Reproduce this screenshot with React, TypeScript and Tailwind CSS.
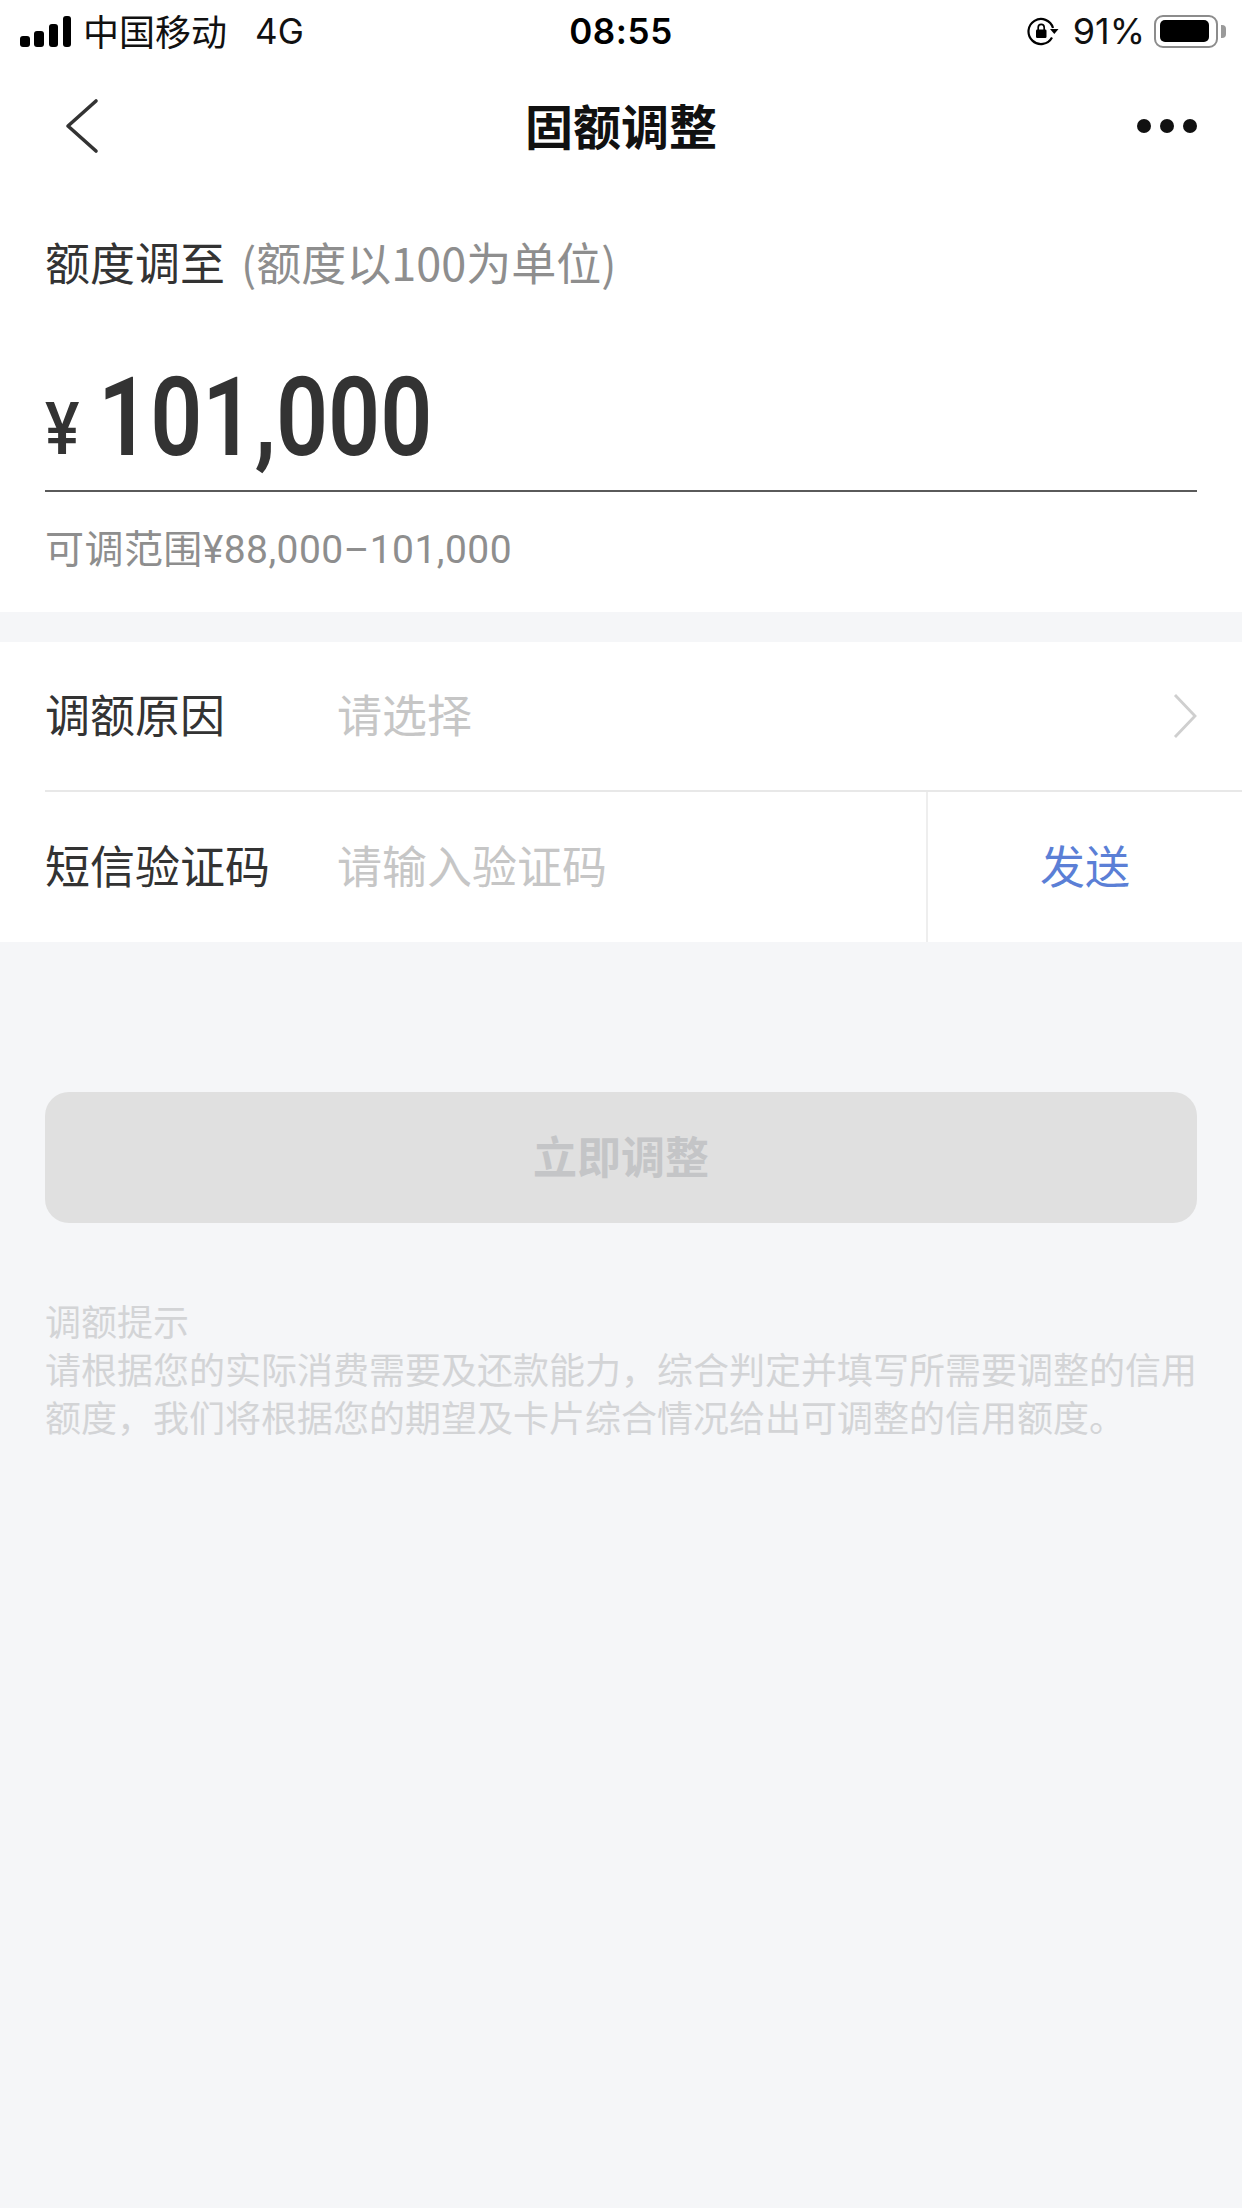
const CJK = '"Noto Sans CJK SC", "Noto Sans", sans-serif';

function Signal() {
  return (
    <svg width="51" height="31" viewBox="0 0 51 31" className="shrink-0">
      <rect x="0" y="20" width="10" height="11" rx="3" fill="#000" />
      <rect x="14" y="15" width="10" height="16" rx="3" fill="#000" />
      <rect x="29" y="8" width="9" height="23" rx="3" fill="#000" />
      <rect x="43" y="0" width="8" height="31" rx="3" fill="#000" />
    </svg>
  );
}

function RotationLock() {
  return (
    <svg width="32" height="30" viewBox="0 0 32 30" className="shrink-0">
      <path d="M26 12A12.5 12.5 0 1 0 25 21.5" fill="none" stroke="#000" strokeWidth="2.2" />
      <path d="M23 13h8.5l-4.2 5z" fill="#000" />
      <rect x="9" y="13.5" width="10.5" height="8.5" rx="1.2" fill="#000" />
      <path d="M11.2 14v-2.6a3 3 0 0 1 6 0V14" fill="none" stroke="#000" strokeWidth="1.7" />
    </svg>
  );
}

function Battery() {
  return (
    <div className="flex items-center gap-[3px] shrink-0">
      <div className="w-[64px] h-[33px] rounded-[9px] border-[2.5px] border-[#8c8c8c] pl-[3.5px] pr-[7.5px] py-[3.5px]">
        <div className="w-full h-full rounded-[5px] bg-black" />
      </div>
      <div className="w-[5px] h-[13px] rounded-r-[4px] bg-[#9a9a9a]" />
    </div>
  );
}

export default function App() {
  return (
    <div
      className="w-[1242px] h-[2208px] flex flex-col bg-[#f5f6f8] overflow-hidden"
      style={{ fontFamily: CJK }}
    >
      <section className="bg-white h-[612px] flex flex-col shrink-0">
        {/* status bar */}
        <div className="h-[62px] grid grid-cols-3 items-center text-black shrink-0">
          <div className="flex items-center pl-[20px] whitespace-nowrap">
            <Signal />
            <span className="ml-[12px] text-[36px] leading-[44px] mb-[2px] text-[#111]">中国移动</span>
            <span
              className="ml-[28px] text-[35px] leading-[44px] text-[#111]"
              style={{ fontFamily: "Inter, sans-serif" }}
            >
              4G
            </span>
          </div>
          <div
            className="text-center text-[35px] leading-[44px] font-semibold tracking-[0.6px]"
            style={{ fontFamily: "Inter, sans-serif" }}
          >
            08:55
          </div>
          <div className="flex items-center justify-end pr-[16px]">
            <RotationLock />
            <span
              className="ml-[14px] mr-[9px] text-[36px] leading-[44px] text-[#111]"
              style={{ fontFamily: "Inter, sans-serif" }}
            >
              91%
            </span>
            <Battery />
          </div>
        </div>

        {/* nav */}
        <div className="h-[128px] grid grid-cols-3 items-center pl-[65px] pr-[45px] shrink-0">
          <svg width="34" height="56" viewBox="0 0 34 56">
            <path d="M31 3L3 28l28 25" fill="none" stroke="#333" strokeWidth="3.6" strokeLinecap="round" strokeLinejoin="round" />
          </svg>
          <h1 className="-ml-[20px] text-center text-[48px] leading-[64px] mb-[4px] font-bold text-[#111]">固额调整</h1>
          <div className="flex items-center justify-end gap-[9px]">
            <span className="w-[14px] h-[14px] rounded-full bg-[#111]" />
            <span className="w-[14px] h-[14px] rounded-full bg-[#111]" />
            <span className="w-[14px] h-[14px] rounded-full bg-[#111]" />
          </div>
        </div>

        {/* amount */}
        <div className="px-[45px] flex flex-col flex-1">
          <div className="mt-[44px] h-[56px] flex items-center text-[45px] leading-[56px]">
            <span className="text-[#333]">额度调至</span>
            <span className="ml-[16px] text-[#8e8e8e]">(额度以100为单位)</span>
          </div>
          <div className="h-[202px] flex items-end border-b-2 border-[#5a5a5a] pb-[17px]">
            <div className="flex items-end text-[#333] h-[110px] w-full">
              <span
                className="text-[72px] leading-[72px] font-medium w-[53px] mb-[7px] origin-left scale-x-[0.9]"
                style={{ fontFamily: "Roboto, sans-serif" }}
              >
                ¥
              </span>
              <span
                className="text-[110px] leading-[110px] font-semibold origin-left scale-x-[0.83]"
                style={{ fontFamily: "Roboto, sans-serif" }}
              >
                101,000
              </span>
            </div>
          </div>
          <div
            className="mt-[34px] text-[39px] leading-[48px] text-[#8e8e8e] tracking-[0.45px]"
            style={{ fontFamily: `Roboto, ${CJK}` }}
          >
            可调范围¥88,000–101,000
          </div>
        </div>
      </section>

      {/* form */}
      <section className="mt-[30px] bg-white h-[300px] flex flex-col shrink-0 text-[45px] leading-[60px]">
        <div className="h-[150px] pl-[45px] flex items-center">
          <div className="flex items-center h-full flex-1 border-b-2 border-[#e8e8e8] pr-[45px]">
            <span className="w-[292px] mb-[5px] text-[#333]">调额原因</span>
            <span className="flex-1 mb-[5px] text-[#c6c6c6]">请选择</span>
            <svg width="24" height="46" viewBox="0 0 24 46">
              <path d="M2 2l20 21L2 44" fill="none" stroke="#cfcfcf" strokeWidth="2.8" />
            </svg>
          </div>
        </div>
        <div className="h-[150px] flex items-stretch">
          <div className="flex-1 pl-[45px] flex items-center border-r-2 border-[#eeeeee]">
            <span className="w-[292px] mb-[5px] text-[#333]">短信验证码</span>
            <span className="mb-[5px] text-[#c6c6c6]">请输入验证码</span>
          </div>
          <div className="w-[314px] pb-[5px] flex items-center justify-center text-[#5b7fd6]">发送</div>
        </div>
      </section>

      {/* action */}
      <section className="px-[45px] pt-[150px] flex flex-col">
        <div className="h-[131px] pb-[5px] rounded-[24px] bg-[#e0e0e0] flex items-center justify-center text-[44px] font-bold text-[#c4c5c7]">
          立即调整
        </div>
        <div className="mt-[73px] text-[36px] leading-[48px] text-[#d3d4d6]">
          <p>调额提示</p>
          <p>
            请根据您的实际消费需要及还款能力，综合判定并填写所需要调整的信用
            <br />
            额度，我们将根据您的期望及卡片综合情况给出可调整的信用额度。
          </p>
        </div>
      </section>
    </div>
  );
}
